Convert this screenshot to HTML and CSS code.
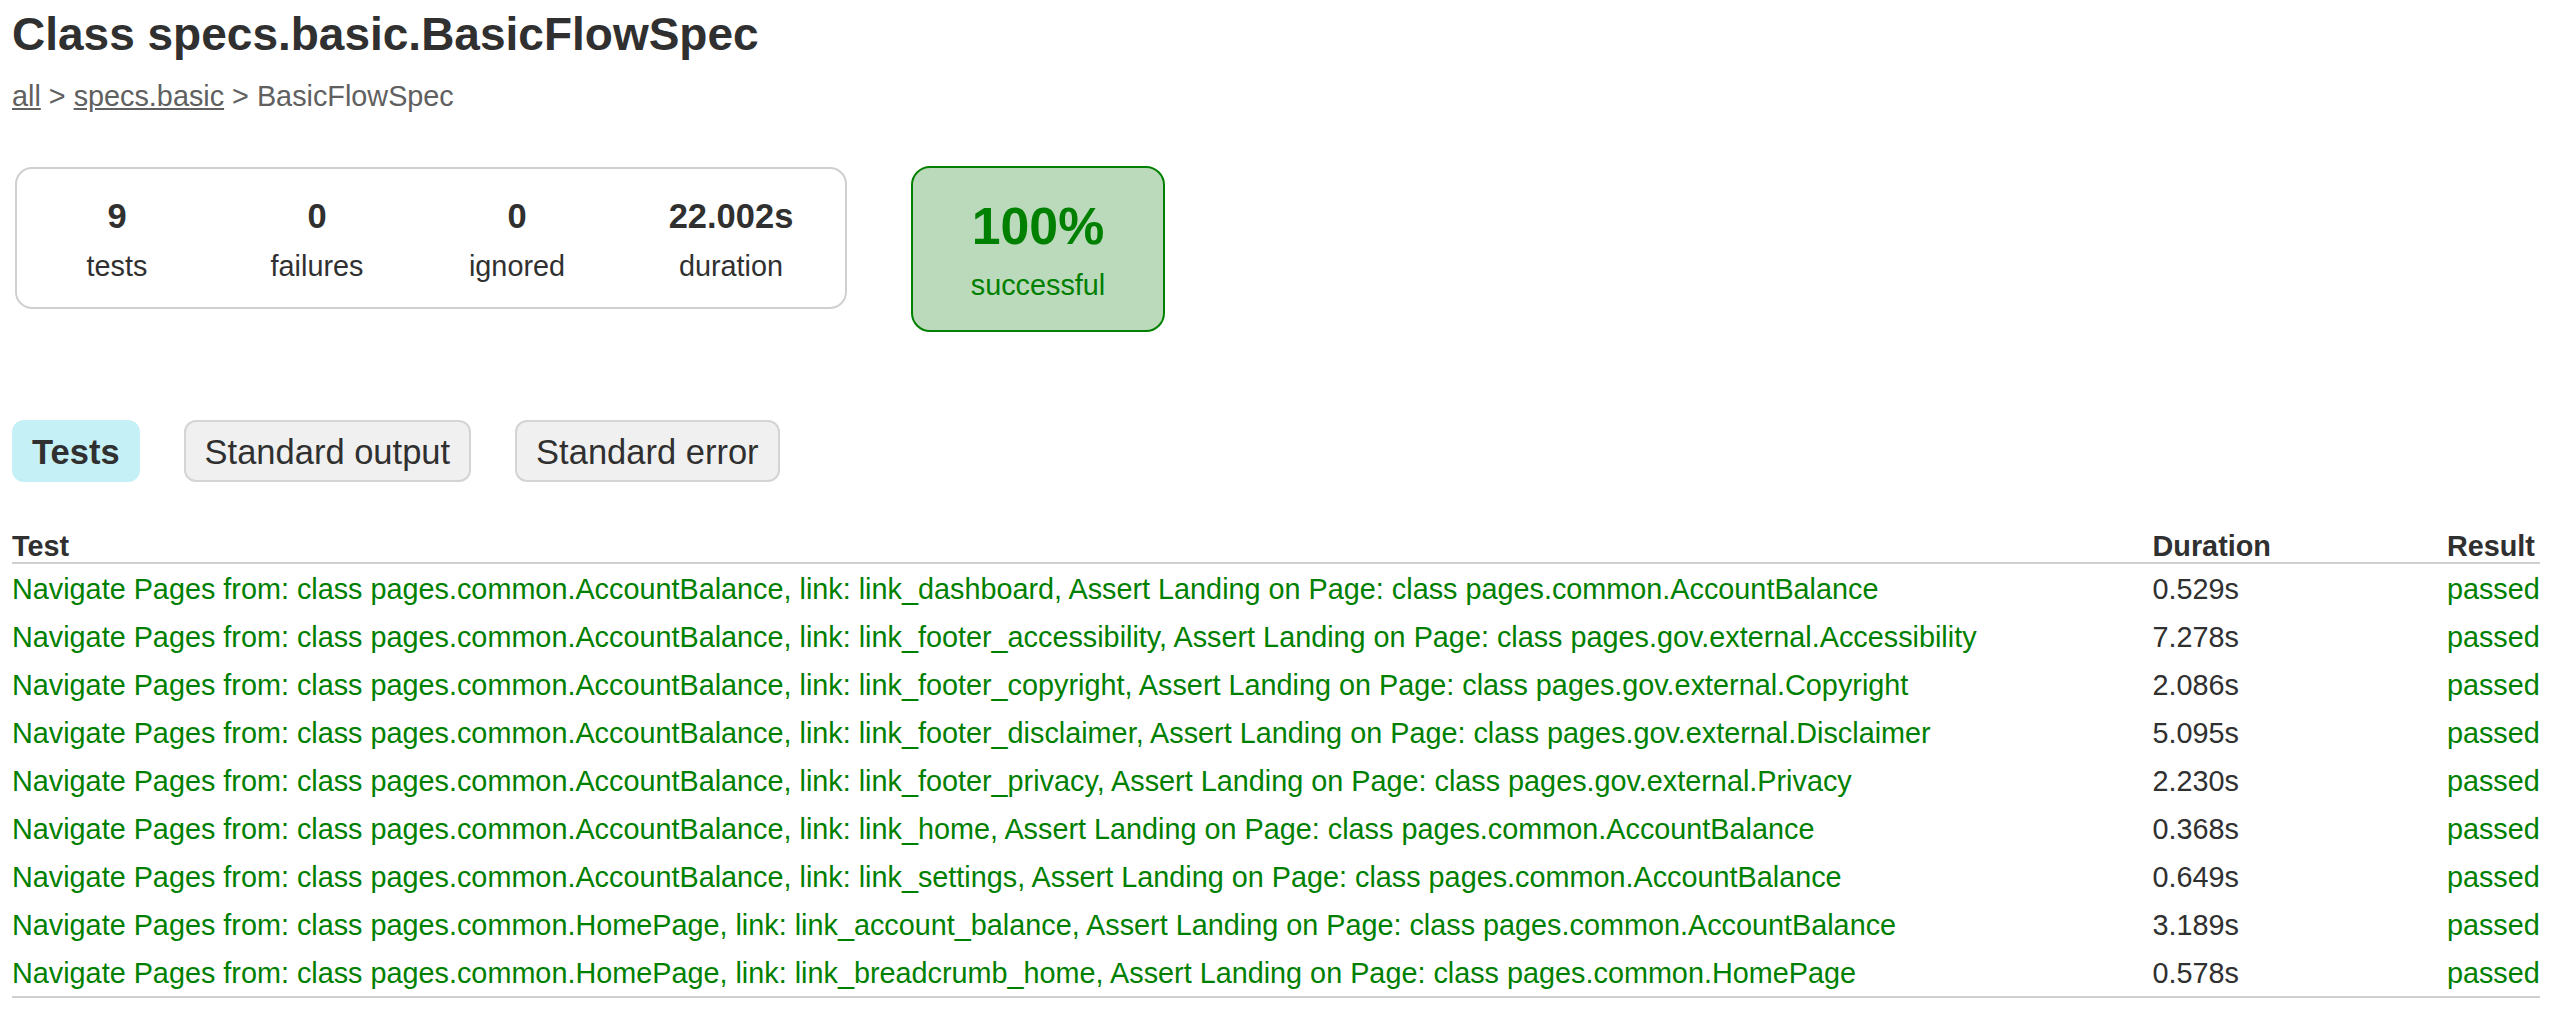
FILE: index.html
```html
<!DOCTYPE html>
<html lang="en">
<head>
<meta charset="utf-8">
<title>Test results - Class specs.basic.BasicFlowSpec</title>
<link rel="stylesheet" href="styles.css">
</head>
<body>
<div class="content">
  <h1 class="page-title">Class specs.basic.BasicFlowSpec</h1>
  <div class="breadcrumbs"><a href="#">all</a> &gt; <a href="#">specs.basic</a> &gt; BasicFlowSpec</div>

  <div class="summary">
    <div class="summary-group">
      <div class="info-box">
        <div class="counter">9</div>
        <p class="info-label">tests</p>
      </div>
      <div class="info-box">
        <div class="counter">0</div>
        <p class="info-label">failures</p>
      </div>
      <div class="info-box">
        <div class="counter">0</div>
        <p class="info-label">ignored</p>
      </div>
      <div class="info-box info-box-wide">
        <div class="counter">22.002s</div>
        <p class="info-label">duration</p>
      </div>
    </div>
    <div class="success-rate">
      <div class="percent">100%</div>
      <p class="info-label">successful</p>
    </div>
  </div>

  <ul class="tab-links">
    <li class="tab-link selected"><a href="#tab0">Tests</a></li>
    <li class="tab-link"><a href="#tab1">Standard output</a></li>
    <li class="tab-link"><a href="#tab2">Standard error</a></li>
  </ul>

  <table class="tests-table">
    <thead>
      <tr>
        <th>Test</th>
        <th>Duration</th>
        <th>Result</th>
      </tr>
    </thead>
    <tbody>
      <tr><td class="success">Navigate Pages from: class pages.common.AccountBalance, link: link_dashboard, Assert Landing on Page: class pages.common.AccountBalance</td><td>0.529s</td><td class="success">passed</td></tr>
      <tr><td class="success">Navigate Pages from: class pages.common.AccountBalance, link: link_footer_accessibility, Assert Landing on Page: class pages.gov.external.Accessibility</td><td>7.278s</td><td class="success">passed</td></tr>
      <tr><td class="success">Navigate Pages from: class pages.common.AccountBalance, link: link_footer_copyright, Assert Landing on Page: class pages.gov.external.Copyright</td><td>2.086s</td><td class="success">passed</td></tr>
      <tr><td class="success">Navigate Pages from: class pages.common.AccountBalance, link: link_footer_disclaimer, Assert Landing on Page: class pages.gov.external.Disclaimer</td><td>5.095s</td><td class="success">passed</td></tr>
      <tr><td class="success">Navigate Pages from: class pages.common.AccountBalance, link: link_footer_privacy, Assert Landing on Page: class pages.gov.external.Privacy</td><td>2.230s</td><td class="success">passed</td></tr>
      <tr><td class="success">Navigate Pages from: class pages.common.AccountBalance, link: link_home, Assert Landing on Page: class pages.common.AccountBalance</td><td>0.368s</td><td class="success">passed</td></tr>
      <tr><td class="success">Navigate Pages from: class pages.common.AccountBalance, link: link_settings, Assert Landing on Page: class pages.common.AccountBalance</td><td>0.649s</td><td class="success">passed</td></tr>
      <tr><td class="success">Navigate Pages from: class pages.common.HomePage, link: link_account_balance, Assert Landing on Page: class pages.common.AccountBalance</td><td>3.189s</td><td class="success">passed</td></tr>
      <tr><td class="success">Navigate Pages from: class pages.common.HomePage, link: link_breadcrumb_home, Assert Landing on Page: class pages.common.HomePage</td><td>0.578s</td><td class="success">passed</td></tr>
    </tbody>
  </table>
</div>
</body>
</html>
```

FILE: styles.css
```css
html, body {
  margin: 0;
  padding: 0;
  background: #ffffff;
}

body {
  font-family: "Liberation Sans", Arial, Helvetica, sans-serif;
  font-size: 28.8px;
  line-height: 30px;
  color: #303030;
}

.content {
  padding: 11px 0 0 12px;
}

.page-title {
  margin: 0;
  font-size: 46px;
  line-height: 47px;
  font-weight: bold;
  white-space: nowrap;
  color: #303030;
}

.breadcrumbs {
  margin-top: 23px;
  line-height: 30px;
  color: #606060;
  white-space: nowrap;
}

.breadcrumbs a {
  color: #606060;
  text-decoration: underline;
}

.summary {
  display: flex;
  align-items: flex-start;
  margin-top: 55px;
}

.summary-group {
  display: flex;
  margin: 1px 0 0 3px;
  border: 2px solid #d0d0d0;
  border-radius: 17px;
}

.info-box {
  width: 200px;
  padding: 29px 0 26px;
  text-align: center;
}

.info-box-wide {
  width: 228px;
}

.counter {
  font-size: 34.5px;
  line-height: 36px;
  font-weight: bold;
  margin-bottom: 17px;
}

.info-label {
  margin: 0;
  line-height: 30px;
}

.success-rate {
  width: 250px;
  margin-left: 64px;
  padding: 31.5px 0 29.7px;
  border: 2px solid #008000;
  border-radius: 19px;
  background-color: #bbd9bb;
  color: #008000;
  text-align: center;
}

.percent {
  font-size: 51.8px;
  line-height: 53px;
  font-weight: bold;
  margin-bottom: 17.5px;
}

.tab-links {
  list-style: none;
  display: flex;
  gap: 44px;
  margin: 88px 0 0;
  padding: 0;
}

.tab-link {
  padding: 10px 18px 8px;
  border: 2px solid #d4d4d4;
  border-radius: 12px;
  background-color: #f0f0f0;
}

.tab-link + .tab-link {
  padding-left: 19px;
  padding-right: 19px;
}

.tab-link a {
  display: block;
  font-size: 34.5px;
  line-height: 40px;
  color: #303030;
  text-decoration: none;
  white-space: nowrap;
}

.tab-link.selected {
  background-color: #c5f0f5;
  border-color: #c5f0f5;
}

.tab-link.selected a {
  font-weight: bold;
}

.tests-table {
  margin-top: 49px;
  border-collapse: collapse;
  border-bottom: 2px solid #d0d0d0;
}

.tests-table th {
  text-align: left;
  font-weight: bold;
  line-height: 31px;
  padding: 0 0 0 176px;
  border-bottom: 2px solid #d0d0d0;
  white-space: nowrap;
}

.tests-table td {
  padding: 10px 0 8px 176px;
  line-height: 30px;
  white-space: nowrap;
}

.tests-table th:first-child,
.tests-table td:first-child {
  padding-left: 0;
}

.success {
  color: #008000;
}
```
